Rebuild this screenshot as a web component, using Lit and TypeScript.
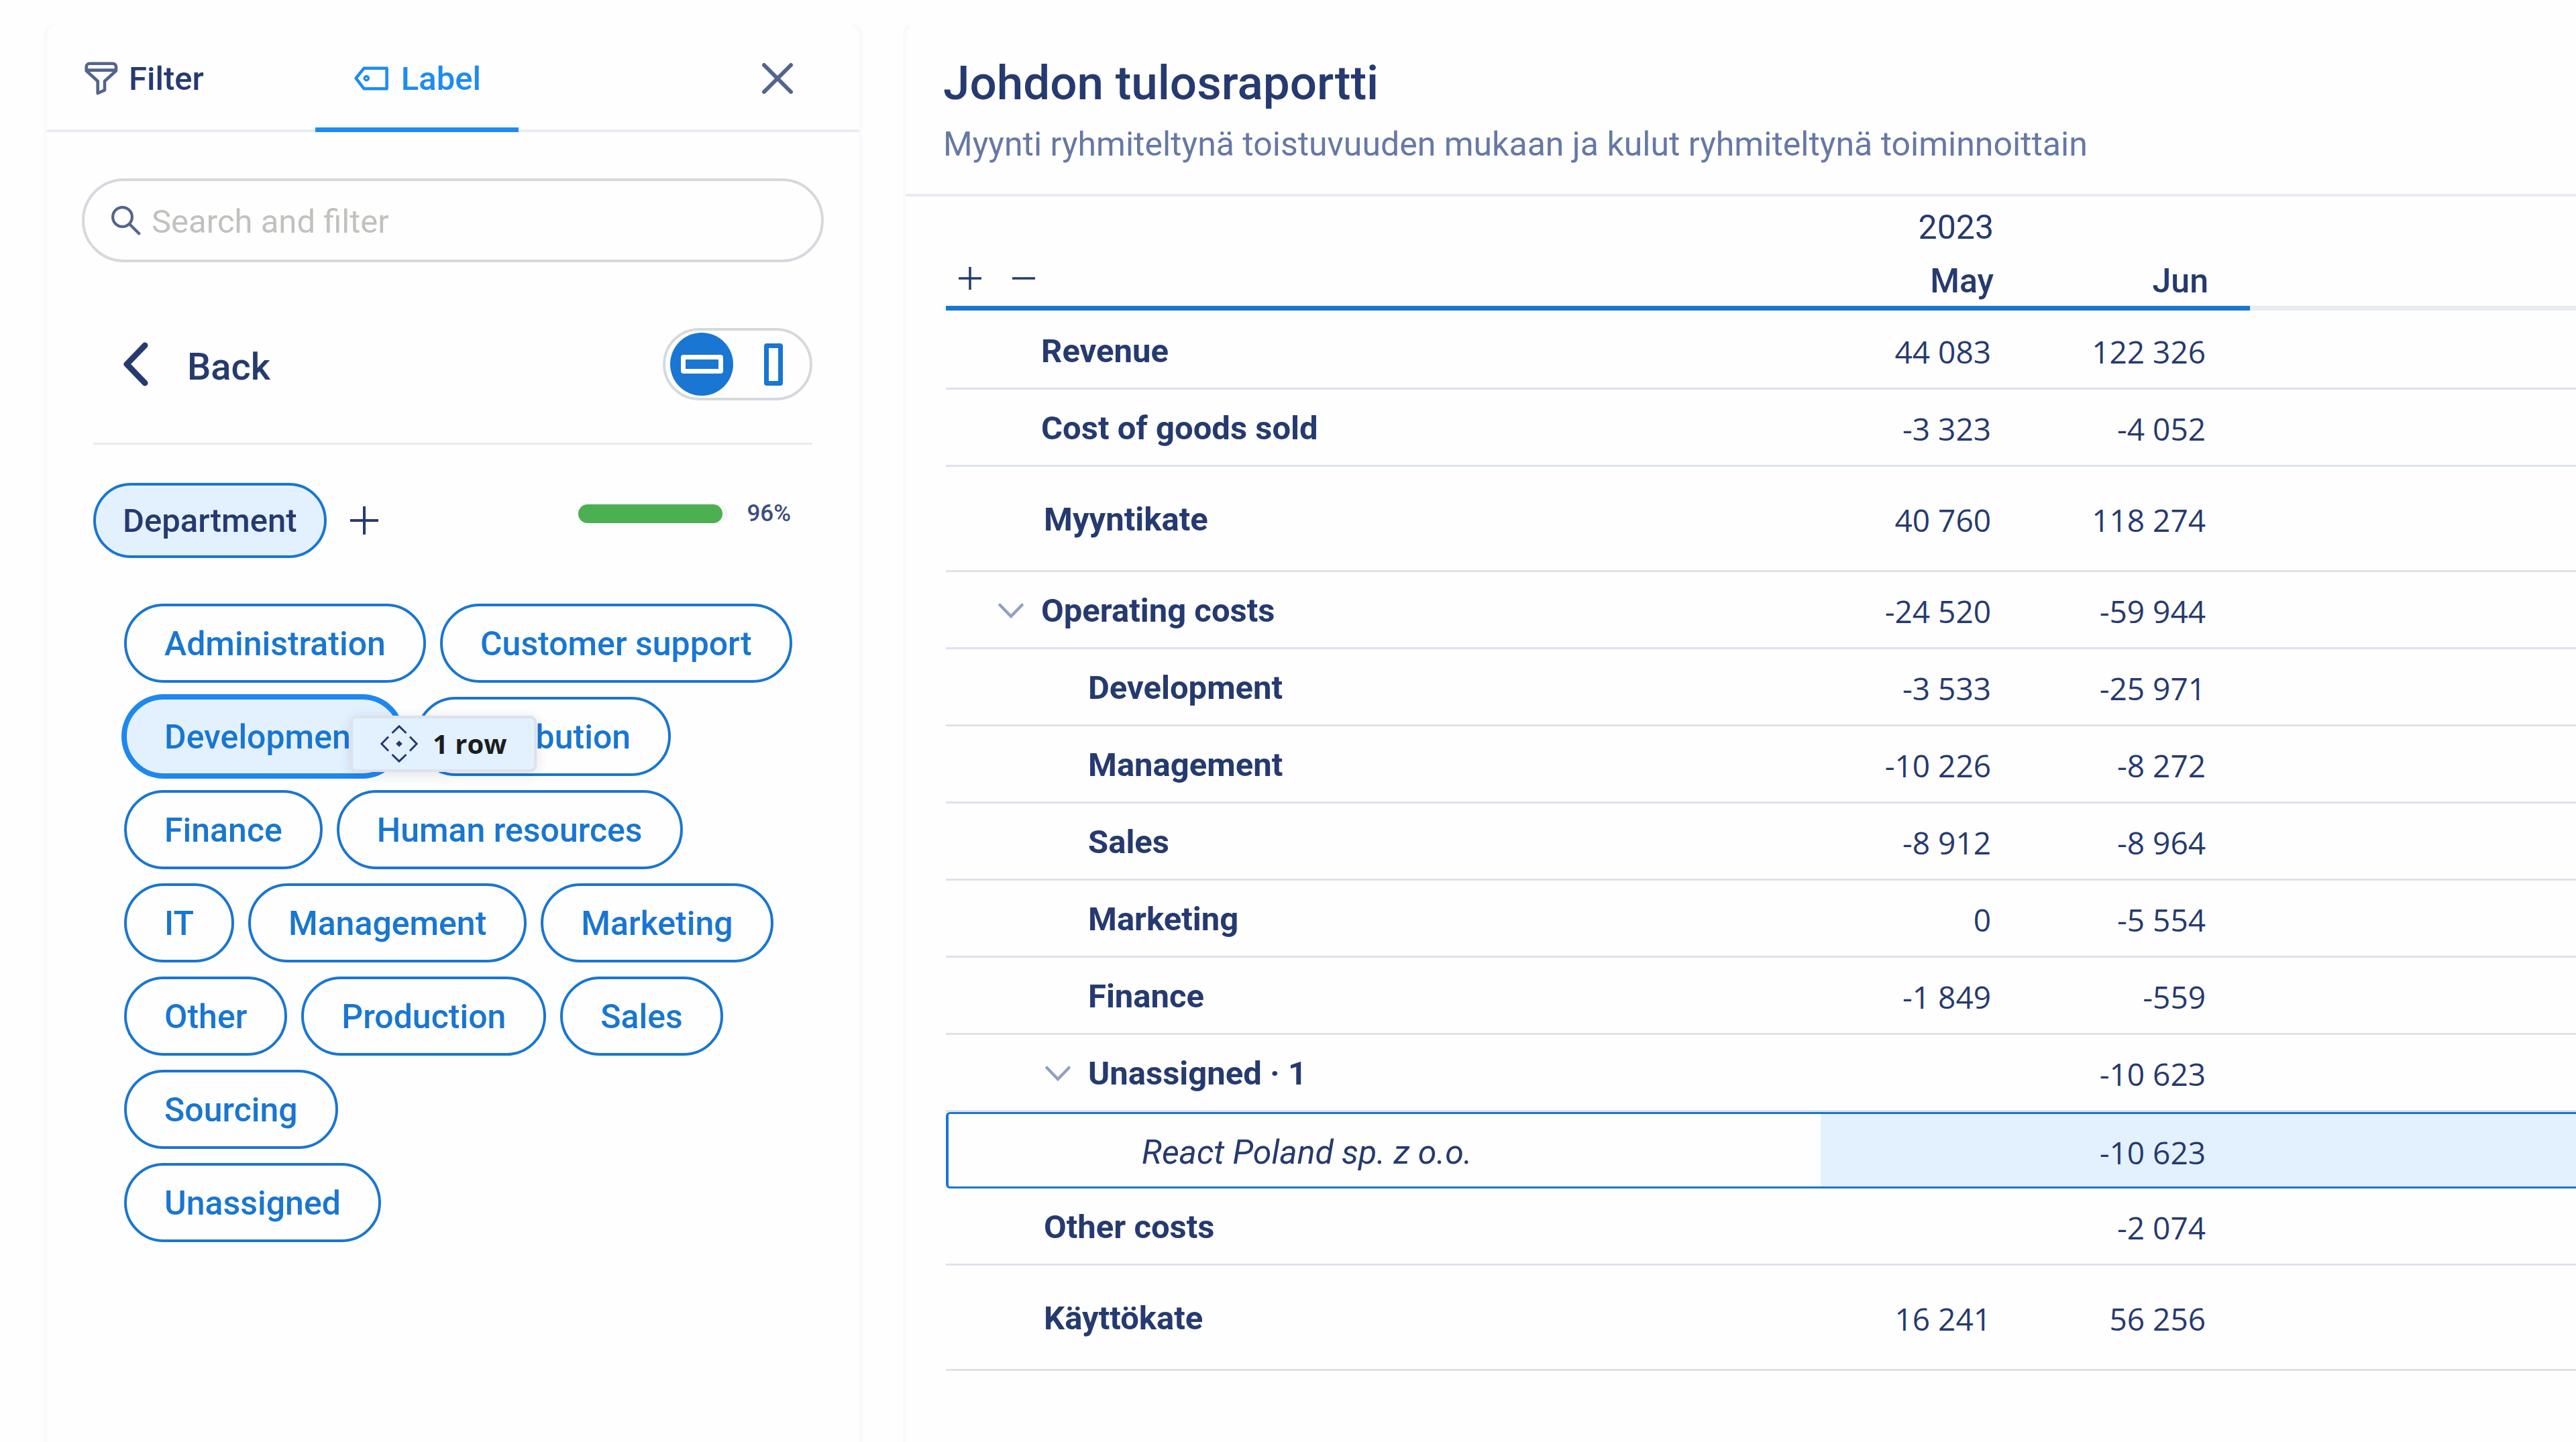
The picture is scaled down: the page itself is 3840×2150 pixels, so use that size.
import { LitElement, html, css, svg, nothing } from "lit";
import { customElement, property, state } from "lit/decorators.js";
import { classMap } from "lit/directives/class-map.js";
import { styleMap } from "lit/directives/style-map.js";

interface ReportRow {
  label: string;
  may?: string;
  jun?: string;
  kind: "group" | "total" | "child" | "item";
  open?: boolean;
}

const REPORT_ROWS: ReportRow[] = [
  { label: "Revenue", may: "44 083", jun: "122 326", kind: "group" },
  { label: "Cost of goods sold", may: "-3 323", jun: "-4 052", kind: "group" },
  { label: "Myyntikate", may: "40 760", jun: "118 274", kind: "total" },
  { label: "Operating costs", may: "-24 520", jun: "-59 944", kind: "group", open: true },
  { label: "Development", may: "-3 533", jun: "-25 971", kind: "child" },
  { label: "Management", may: "-10 226", jun: "-8 272", kind: "child" },
  { label: "Sales", may: "-8 912", jun: "-8 964", kind: "child" },
  { label: "Marketing", may: "0", jun: "-5 554", kind: "child" },
  { label: "Finance", may: "-1 849", jun: "-559", kind: "child" },
  { label: "Unassigned · 1", jun: "-10 623", kind: "child", open: true },
  { label: "React Poland sp. z o.o.", jun: "-10 623", kind: "item" },
  { label: "Other costs", jun: "-2 074", kind: "group" },
  { label: "Käyttökate", may: "16 241", jun: "56 256", kind: "total" },
];

const DEPARTMENTS = [
  "Administration",
  "Customer support",
  "Development",
  "Distribution",
  "Finance",
  "Human resources",
  "IT",
  "Management",
  "Marketing",
  "Other",
  "Production",
  "Sales",
  "Sourcing",
];

const shared = css`
  * {
    box-sizing: border-box;
  }
  button {
    margin: 0;
    padding: 0;
    border: 0;
    background: none;
    color: inherit;
    font: inherit;
    cursor: pointer;
  }
  svg {
    display: block;
    flex: none;
    fill: none;
    stroke: currentColor;
  }
`;

@customElement("label-panel")
export class LabelPanel extends LitElement {
  @property({ type: Number }) progress = 96;
  @state() private target = "Development";
  @state() private layout: "row" | "column" = "row";

  static styles = [
    shared,
    css`
      :host {
        display: block;
      }
      .tabs {
        display: flex;
        height: 160px;
        box-shadow: inset 0 -4px 0 #e9ebf2;
      }
      .tab {
        display: flex;
        align-items: center;
        gap: 16px;
        padding: 0 56px;
        font-weight: 500;
      }
      .tab span {
        padding-top: 2px;
      }
      .tab + .tab {
        margin-left: 110px;
      }
      .tab.active {
        color: #1e8bf3;
        box-shadow: inset 0 -7px 0 #1e8bf3;
      }
      .muted {
        color: #52648f;
      }
      .close {
        margin-left: auto;
        padding: 0 98px;
        color: #52648f;
      }
      .search {
        display: flex;
        align-items: center;
        gap: 16px;
        height: 125px;
        margin: 69px 53px 0 52px;
        padding: 0 40px;
        border: 4px solid #d5d9de;
        border-radius: 63px;
        color: #52648f;
      }
      .search input {
        flex: 1;
        min-width: 0;
        height: 68px;
        padding: 4px 0 0;
        border: 0;
        outline: 0;
        background: transparent;
        color: #253a70;
        font: inherit;
      }
      .search input::placeholder {
        color: #c1c1bd;
        opacity: 1;
      }
      .content {
        margin: 98px 70px 0 69px;
      }
      .nav {
        display: flex;
        align-items: center;
        justify-content: space-between;
        padding-bottom: 63px;
        border-bottom: 3px solid #e9ebf2;
      }
      .back {
        display: flex;
        align-items: center;
        gap: 58px;
        padding-left: 44px;
        font-size: 56px;
        font-weight: 500;
        line-height: 72px;
      }
      .back span {
        padding-top: 7px;
      }
      .switch {
        display: flex;
        gap: 13px;
        padding: 3px 7px;
        border: 4px solid #d5d9de;
        border-radius: 54px;
      }
      .switch button {
        display: grid;
        place-items: center;
        width: 94px;
        height: 94px;
        border-radius: 50%;
        color: #1976d2;
      }
      .switch button.on {
        background: #1976d2;
        color: #fff;
      }
      .glyph {
        width: 63px;
        height: 28px;
        border: 7px solid currentColor;
        border-radius: 4px;
      }
      .glyph.tall {
        width: 28px;
        height: 63px;
      }
      .group {
        display: flex;
        align-items: flex-start;
        margin-top: 57px;
      }
      .chip {
        height: 118px;
        padding: 2px 56px 0;
        border: 4px solid #1976d2;
        border-radius: 59px;
        color: #1976d2;
        font-size: 50px;
        font-weight: 500;
        white-space: nowrap;
      }
      .chip.head {
        height: 112px;
        padding: 2px 40px 0;
        background: #e3f1ff;
        color: #253a70;
        font-size: 49px;
      }
      .chip.drop {
        border-color: #1e88ee;
        background: #e3f1ff;
        box-shadow: 0 0 0 4px #1e88ee;
      }
      .add {
        display: grid;
        place-items: center;
        width: 112px;
        height: 112px;
      }
      .progress {
        display: flex;
        align-items: center;
        gap: 28px;
        height: 92px;
        margin-left: auto;
        padding-right: 32px;
        color: #3b4d80;
        font-size: 35px;
        font-weight: 500;
      }
      .track {
        width: 223px;
        height: 28px;
        border-radius: 14px;
        background: #f4f5fa;
      }
      .fill {
        height: 100%;
        border-radius: 14px;
        background: #4caf50;
      }
      .chips {
        position: relative;
        display: flex;
        flex-direction: column;
        align-items: flex-start;
        gap: 21px;
        margin-top: 68px;
        padding: 0 21px 0 46px;
      }
      .wrap {
        display: flex;
        flex-wrap: wrap;
        gap: 21px;
      }
      .drag {
        position: absolute;
        top: 167px;
        left: 383px;
        display: flex;
        align-items: center;
        gap: 22px;
        width: 278px;
        height: 84px;
        padding-left: 41px;
        border: 4px solid #dde2ec;
        border-radius: 9px;
        background: #e3f1ff;
        box-shadow: 0 4px 18px rgba(37, 58, 112, 0.14);
        color: #253a70;
      }
      .drag span {
        color: #1d1d1f;
        font-family: "Open Sans", "Noto Sans", sans-serif;
        font-size: 40px;
        font-weight: 700;
        white-space: nowrap;
      }
    `,
  ];

  private chip(name: string) {
    return html`<button
      class=${classMap({ chip: true, drop: name === this.target })}
      @click=${() => (this.target = name)}
    >${name}</button>`;
  }

  render() {
    return html`
      <div class="tabs" role="tablist">
        <button class="tab" role="tab" aria-selected="false">
          <svg class="muted" width="50" height="50" viewBox="0 0 50 50" stroke-width="4.6" stroke-linejoin="round">
            <path d="M7.500 2.700H42A5 5 0 0 1 47 7.700V13.500L30 29V42.300L19.700 47V29L2.700 13.500V7.700A5 5 0 0 1 7.500 2.700ZM3.500 12.600H46" />
          </svg>
          <span>Filter</span>
        </button>
        <button class="tab active" role="tab" aria-selected="true">
          <svg width="56" height="36" viewBox="-2 0 56 36" stroke-width="4.500" stroke-linejoin="round">
            <path d="M2.600 17.700L14.500 2.800H48.600V33.200H14.500Z" />
            <circle cx="18.300" cy="17.700" r="3" stroke-width="3.600" />
          </svg>
          <span>Label</span>
        </button>
        <button class="close" aria-label="Close">
          <svg width="48" height="48" viewBox="0 0 48 48" stroke-width="6" stroke-linecap="round">
            <path d="M4 4L44 44M44 4L4 44" />
          </svg>
        </button>
      </div>

      <label class="search">
        <svg width="44" height="44" viewBox="0 0 44 44" stroke-width="4.200">
          <circle cx="16.500" cy="16.500" r="14.400" />
          <path d="M26.500 26.500L42.500 42.500" />
        </svg>
        <input type="text" placeholder="Search and filter" aria-label="Search and filter" />
      </label>

      <div class="content">
        <div class="nav">
          <button class="back">
            <svg width="38" height="66" viewBox="0 0 38 66" stroke-width="9" stroke-linecap="round" stroke-linejoin="round">
              <path d="M33 5L6 33L33 61" />
            </svg>
            <span>Back</span>
          </button>
          <div class="switch" role="group" aria-label="Orientation">
            <button
              class=${classMap({ on: this.layout === "row" })}
              aria-label="Rows"
              @click=${() => (this.layout = "row")}
            ><i class="glyph"></i></button>
            <button
              class=${classMap({ on: this.layout === "column" })}
              aria-label="Columns"
              @click=${() => (this.layout = "column")}
            ><i class="glyph tall"></i></button>
          </div>
        </div>

        <div class="group">
          <button class="chip head">Department</button>
          <button class="add" aria-label="Add">
            <svg width="42" height="42" viewBox="0 0 42 42" stroke-width="4">
              <path d="M21 0V42M0 21H42" />
            </svg>
          </button>
          <div class="progress">
            <div class="track">
              <div class="fill" style=${styleMap({ width: `${this.progress}%` })}></div>
            </div>
            <span>${this.progress}%</span>
          </div>
        </div>

        <div class="chips">
          <div class="wrap">${DEPARTMENTS.map((name) => this.chip(name))}</div>
          ${this.chip("Unassigned")}
          <div class="drag">
            <svg width="56" height="56" viewBox="0 0 56 56" stroke-width="3">
              <path d="M17.500 12L28 1.800L38.500 12M17.500 44L28 54.200L38.500 44M12 17.500L1.800 28L12 38.500M44 17.500L54.200 28L44 38.500" />
              <path d="M28 23.200L32.800 28L28 32.800L23.200 28Z" fill="currentColor" stroke="none" />
            </svg>
            <span>1 row</span>
          </div>
        </div>
      </div>
    `;
  }
}

@customElement("report-table")
export class ReportTable extends LitElement {
  static styles = [
    shared,
    css`
      :host {
        display: block;
      }
      .head {
        padding: 38px 56px 32px;
        border-bottom: 4px solid #e9ebf2;
      }
      h1 {
        margin: 0;
        font-size: 71px;
        font-weight: 500;
        line-height: 98px;
      }
      p {
        margin: 0;
        color: #6678a5;
        font-size: 50px;
        line-height: 84px;
      }
      .body {
        padding: 6px 0 0 60px;
      }
      table {
        width: 100%;
        table-layout: fixed;
        border-collapse: separate;
        border-spacing: 0;
      }
      .name {
        width: 1304px;
      }
      .month {
        width: 320px;
      }
      th,
      td {
        padding: 0;
        text-align: right;
        vertical-align: middle;
      }
      thead th {
        padding-right: 62px;
        font-size: 50px;
        font-weight: 500;
      }
      .years th {
        height: 79px;
        font-weight: 400;
      }
      .months th {
        height: 85px;
        padding-top: 3px;
        border-bottom: 7px solid #1976d2;
      }
      .months th.rest {
        border-color: #e9ecf1;
      }
      .tools {
        display: flex;
        gap: 38px;
        padding: 0 0 8px 15px;
      }
      .tools button {
        display: grid;
        place-items: center;
        width: 42px;
        height: 48px;
      }
      tbody th,
      tbody td {
        height: 115px;
        padding-top: 4px;
        border-bottom: 3px solid #dde2ec;
      }
      tbody tr:first-child > * {
        height: 118px;
        padding-top: 7px;
      }
      tbody td {
        padding-right: 66px;
        font-family: "Open Sans", "Noto Sans", sans-serif;
        font-size: 46px;
      }
      tbody th {
        text-align: left;
        font-weight: 700;
      }
      .line {
        display: flex;
        align-items: center;
        gap: 26px;
        padding-left: 142px;
      }
      .open .line {
        padding-left: 78px;
      }
      .child .line {
        padding-left: 212px;
      }
      .child.open .line {
        padding-left: 148px;
      }
      .total > * {
        height: 157px;
      }
      .total .line,
      .plain .line {
        padding-left: 146px;
      }
      .item .line {
        padding-left: 288px;
        font-size: 50px;
        font-style: italic;
        font-weight: 400;
      }
      .twisty {
        color: #94a0bf;
      }
      tbody .item > * {
        height: 114px;
        padding-top: 6px;
        border-top: 3px solid #1976d2;
        border-bottom: 3px solid #1976d2;
      }
      .item th {
        border-left: 4px solid #1976d2;
        border-radius: 6px 0 0 6px;
      }
      .item td {
        background: #e3f1ff;
      }
    `,
  ];

  private row(r: ReportRow) {
    const classes = {
      [r.kind]: true,
      open: Boolean(r.open),
      plain: r.label === "Other costs",
    };
    return html`<tr class=${classMap(classes)}>
      <th scope="row">
        <div class="line">
          ${r.open
            ? html`<button class="twisty" aria-label="Collapse">
                <svg width="38" height="24" viewBox="0 0 38 24" stroke-width="4.500" stroke-linecap="round">
                  <path d="M2.500 3L19 20L35.500 3" />
                </svg>
              </button>`
            : nothing}
          <span>${r.label}</span>
        </div>
      </th>
      <td>${r.may ?? nothing}</td>
      <td>${r.jun ?? nothing}</td>
      <td></td>
    </tr>`;
  }

  render() {
    const minus = svg`<path d="M0 17H34" />`;
    const plus = svg`<path d="M17 0V34M0 17H34" />`;
    return html`
      <header class="head">
        <h1>Johdon tulosraportti</h1>
        <p>Myynti ryhmiteltynä toistuvuuden mukaan ja kulut ryhmiteltynä toiminnoittain</p>
      </header>
      <div class="body">
        <table>
          <colgroup>
            <col class="name" />
            <col class="month" />
            <col class="month" />
            <col />
          </colgroup>
          <thead>
            <tr class="years">
              <th></th>
              <th scope="col">2023</th>
              <th></th>
              <th></th>
            </tr>
            <tr class="months">
              <th>
                <div class="tools">
                  <button aria-label="Expand all">
                    <svg width="34" height="34" viewBox="0 0 34 34" stroke-width="3.500">${plus}</svg>
                  </button>
                  <button aria-label="Collapse all">
                    <svg width="34" height="34" viewBox="0 0 34 34" stroke-width="3.500">${minus}</svg>
                  </button>
                </div>
              </th>
              <th scope="col">May</th>
              <th scope="col">Jun</th>
              <th class="rest"></th>
            </tr>
          </thead>
          <tbody>
            ${REPORT_ROWS.map((r) => this.row(r))}
          </tbody>
        </table>
      </div>
    `;
  }
}

@customElement("app-root")
export class AppRoot extends LitElement {
  static styles = [
    shared,
    css`
      :host {
        display: block;
      }
      .page {
        display: grid;
        grid-template-columns: minmax(0, 1211fr) minmax(0, 2490fr);
        column-gap: 69px;
        min-height: 100vh;
        padding: 37px 0 0 70px;
        background: #fefefe;
        color: #253a70;
        font-family: Roboto, "Liberation Sans", sans-serif;
        font-size: 49px;
        line-height: 64px;
      }
      .panel {
        border-radius: 16px 16px 0 0;
        box-shadow: 0 0 0 4px #f9fafc, 0 0 6px 2px #f4f5f9;
        clip-path: inset(0 -12px);
      }
      .panel.wide {
        border-radius: 16px 0 0 0;
      }
    `,
  ];

  render() {
    return html`
      <main class="page">
        <label-panel class="panel"></label-panel>
        <report-table class="panel wide"></report-table>
      </main>
    `;
  }
}
